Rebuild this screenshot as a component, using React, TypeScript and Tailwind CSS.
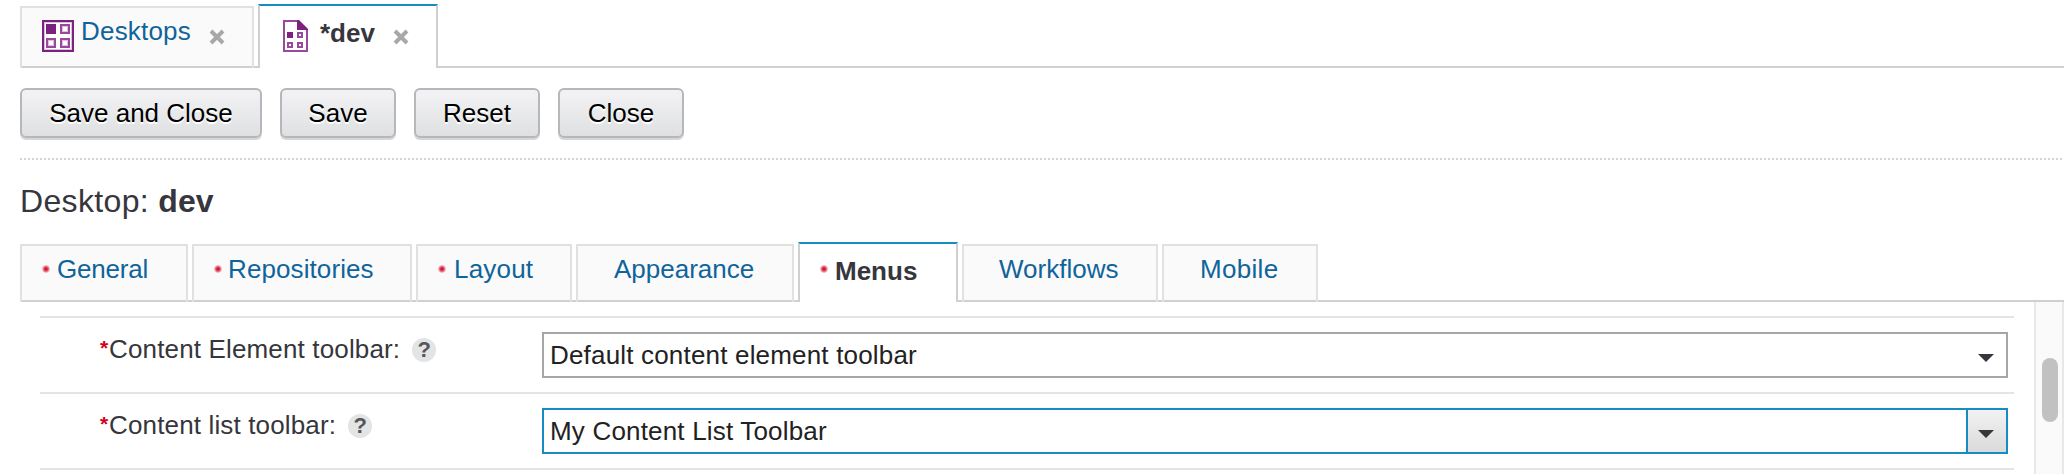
import type { ReactNode } from "react";

function DesktopsIcon() {
  return (
    <svg width="32" height="32" viewBox="0 0 32 32" className="mt-[12px] shrink-0">
      <rect x="1" y="1" width="30" height="30" fill="#fff" stroke="#7d2181" strokeWidth="2" />
      <rect x="2.5" y="2.5" width="27" height="27" fill="none" stroke="#dcc0de" strokeWidth="1" />
      <rect x="4" y="4" width="10" height="10" fill="#7d2181" />
      <g fill="#fff" stroke="#964a99" strokeWidth="2">
        <rect x="19" y="5" width="8" height="8" />
        <rect x="5" y="19" width="8" height="8" />
        <rect x="19" y="19" width="8" height="8" />
      </g>
      <g fill="none" stroke="#dcc0de" strokeWidth="1">
        <rect x="20.5" y="6.5" width="5" height="5" />
        <rect x="6.5" y="20.5" width="5" height="5" />
        <rect x="20.5" y="20.5" width="5" height="5" />
      </g>
    </svg>
  );
}

function PageIcon() {
  return (
    <svg width="26" height="32" viewBox="0 0 26 32" className="-ml-px mt-[14px] shrink-0">
      <path d="M1 1H15L24 10V31H1Z" fill="#fff" stroke="#964a99" strokeWidth="2" />
      <path d="M14 0H16L25 9V10H14Z" fill="#7d2181" />
      <rect x="4" y="12" width="6" height="6" fill="#7d2181" />
      <g fill="#fff" stroke="#964a99" strokeWidth="2">
        <rect x="15" y="13" width="4" height="4" />
        <rect x="5" y="23" width="4" height="4" />
        <rect x="15" y="23" width="4" height="4" />
      </g>
    </svg>
  );
}

function CloseIcon({ className }: { className: string }) {
  return (
    <svg width="16" height="16" viewBox="0 0 16 16" className={className}>
      <path d="M2 2L14 14M14 2L2 14" stroke="#a8a8a8" strokeWidth="4" />
    </svg>
  );
}

function Dot() {
  return <span className="mt-[19px] h-2 w-2 shrink-0 rounded-full bg-[radial-gradient(circle,#d3122f_15%,#e5647a_42%,#f9dfe3_72%)]" />;
}

function Tab({ width, label, required, active, pad }: { width: string; label: string; required?: boolean; active?: boolean; pad: string }) {
  if (active) {
    return (
      <div className={`flex h-[60px] border-x-2 border-t-2 border-x-[#d0d0d0] border-t-[#178cc0] bg-white pl-5 ${width}`}>
        {required && <span className="flex pt-0.5"><Dot /></span>}
        <span className={`pt-[9px] font-bold text-[#36363c] ${pad}`}>{label}</span>
      </div>
    );
  }
  return (
    <div className={`flex h-[58px] border-x-2 border-t-2 border-[#e1e1e1] bg-[#fafafa] shadow-[inset_0_-2px_0_#d0d0d0] ${required ? "pl-5" : ""} ${width}`}>
      {required && <Dot />}
      <span className={`pt-[5px] text-[#0f649b] ${pad}`}>{label}</span>
    </div>
  );
}

function Gap() {
  return <div className="h-0.5 w-1 shrink-0 bg-[#d0d0d0]" />;
}

function Button({ width, children }: { width: string; children: ReactNode }) {
  return (
    <button className={`h-[50px] rounded-md border-2 border-[#b6b6bb] bg-linear-to-b from-[#f3f3f5] to-[#dfe0e2] text-black shadow-[0_2px_0_#d6d6d6] [text-shadow:0_2px_0_#fff] ${width}`}>
      {children}
    </button>
  );
}

function Row({ label, value, focused }: { label: string; value: string; focused?: boolean }) {
  return (
    <div className="flex h-[76px] border-t-2 border-[#e4e4e4] pl-[60px]">
      <div className="flex w-[442px] pt-[14px] text-[#36363c]">
        <span className="w-[9px] text-[21px] leading-[31px] font-bold text-[#d0021b]">*</span>
        <span className="leading-[34px] tracking-[0.15px]">{label}</span>
        <span className="mt-[6px] ml-[12px] flex h-6 w-6 items-center justify-center rounded-full bg-[#e3e4e5] text-[22px] leading-6 font-bold text-[#55555a]">?</span>
      </div>
      <div className={`mt-[14px] flex h-[46px] w-[1466px] border-2 ${focused ? "border-[#178cc0]" : "border-[#a6a6a6]"}`}>
        <span className="flex-1 pl-[6px] leading-[42px] tracking-[0.18px] text-[#222]">{value}</span>
        <span className={`flex justify-center pt-5 ${focused ? "box-content h-[22px] w-[38px] border-l-2 border-[#178cc0] bg-linear-to-b from-[#f2f2f2] to-[#dadada]" : "w-[38px]"}`}>
          <svg width="16" height="8" viewBox="0 0 16 8" className="-ml-[2px]"><path d="M0 0H16L8 8Z" fill="#36363c" /></svg>
        </span>
      </div>
    </div>
  );
}

export default function App() {
  return (
    <div className="h-[474px] w-[2072px] overflow-hidden bg-white pr-2 pl-5 font-['Liberation_Sans',Arial,sans-serif] text-[26px] leading-[36px]">
      <div className="flex h-[68px] items-end">
        <div className="flex h-[62px] w-[234px] border-x-2 border-t-2 border-[#e1e1e1] bg-[#fafafa] pl-5 shadow-[inset_0_-2px_0_#d0d0d0]">
          <DesktopsIcon />
          <span className="ml-[7px] w-[110px] pt-[5px] tracking-[0.2px] text-[#0f649b]">Desktops</span>
          <CloseIcon className="mt-[21px] ml-[18px]" />
        </div>
        <Gap />
        <div className="flex h-16 w-[180px] border-x-2 border-t-2 border-x-[#d0d0d0] border-t-[#178cc0] pl-6">
          <PageIcon />
          <span className="ml-[11px] pt-[9px] font-bold text-[#36363c]">*dev</span>
          <CloseIcon className="mt-[23px] ml-[18px]" />
        </div>
        <div className="h-0.5 flex-1 bg-[#d0d0d0]" />
      </div>
      <div className="mt-5 flex gap-[18px]">
        <Button width="w-[242px]">Save and Close</Button>
        <Button width="w-[116px]">Save</Button>
        <Button width="w-[126px]">Reset</Button>
        <Button width="w-[126px]">Close</Button>
      </div>
      <div className="mt-5 h-0.5 bg-[repeating-linear-gradient(90deg,#d4d4d4_0_2px,#fff_2px_4px)]" />
      <h1 className="mt-[20px] h-[62px] text-[32px] leading-[42px] tracking-[0.35px] text-[#36363c]">
        Desktop: <b className="tracking-normal">dev</b>
      </h1>
      <div className="flex h-[60px] items-end">
        <Tab width="w-[168px]" label="General" required pad="pl-[7px] tracking-[-0.2px]" />
        <Gap />
        <Tab width="w-[220px]" label="Repositories" required pad="pl-[6px] tracking-[0.1px]" />
        <Gap />
        <Tab width="w-[156px]" label="Layout" required pad="pl-[8px] tracking-[0.2px]" />
        <Gap />
        <Tab width="w-[218px]" label="Appearance" pad="pl-[36px]" />
        <Gap />
        <Tab width="w-[160px]" label="Menus" required active pad="pl-[7px]" />
        <Gap />
        <Tab width="w-[196px]" label="Workflows" pad="pl-[35px]" />
        <Gap />
        <Tab width="w-[156px]" label="Mobile" pad="pl-[36px] tracking-[0.3px]" />
        <div className="h-0.5 flex-1 bg-[#d0d0d0]" />
      </div>
      <div className="flex h-[172px] justify-between">
        <div className="ml-5 w-[1974px] pt-[14px]">
          <Row label="Content Element toolbar:" value="Default content element toolbar" />
          <Row label="Content list toolbar:" value="My Content List Toolbar" focused />
          <div className="h-0.5 bg-[#e4e4e4]" />
        </div>
        <div className="w-[30px] border-x-2 border-[#e8e8e8] bg-[#fafafa] pt-14 pl-[6px]">
          <div className="h-16 w-4 rounded-full bg-[#c1c1c1]" />
        </div>
      </div>
    </div>
  );
}
